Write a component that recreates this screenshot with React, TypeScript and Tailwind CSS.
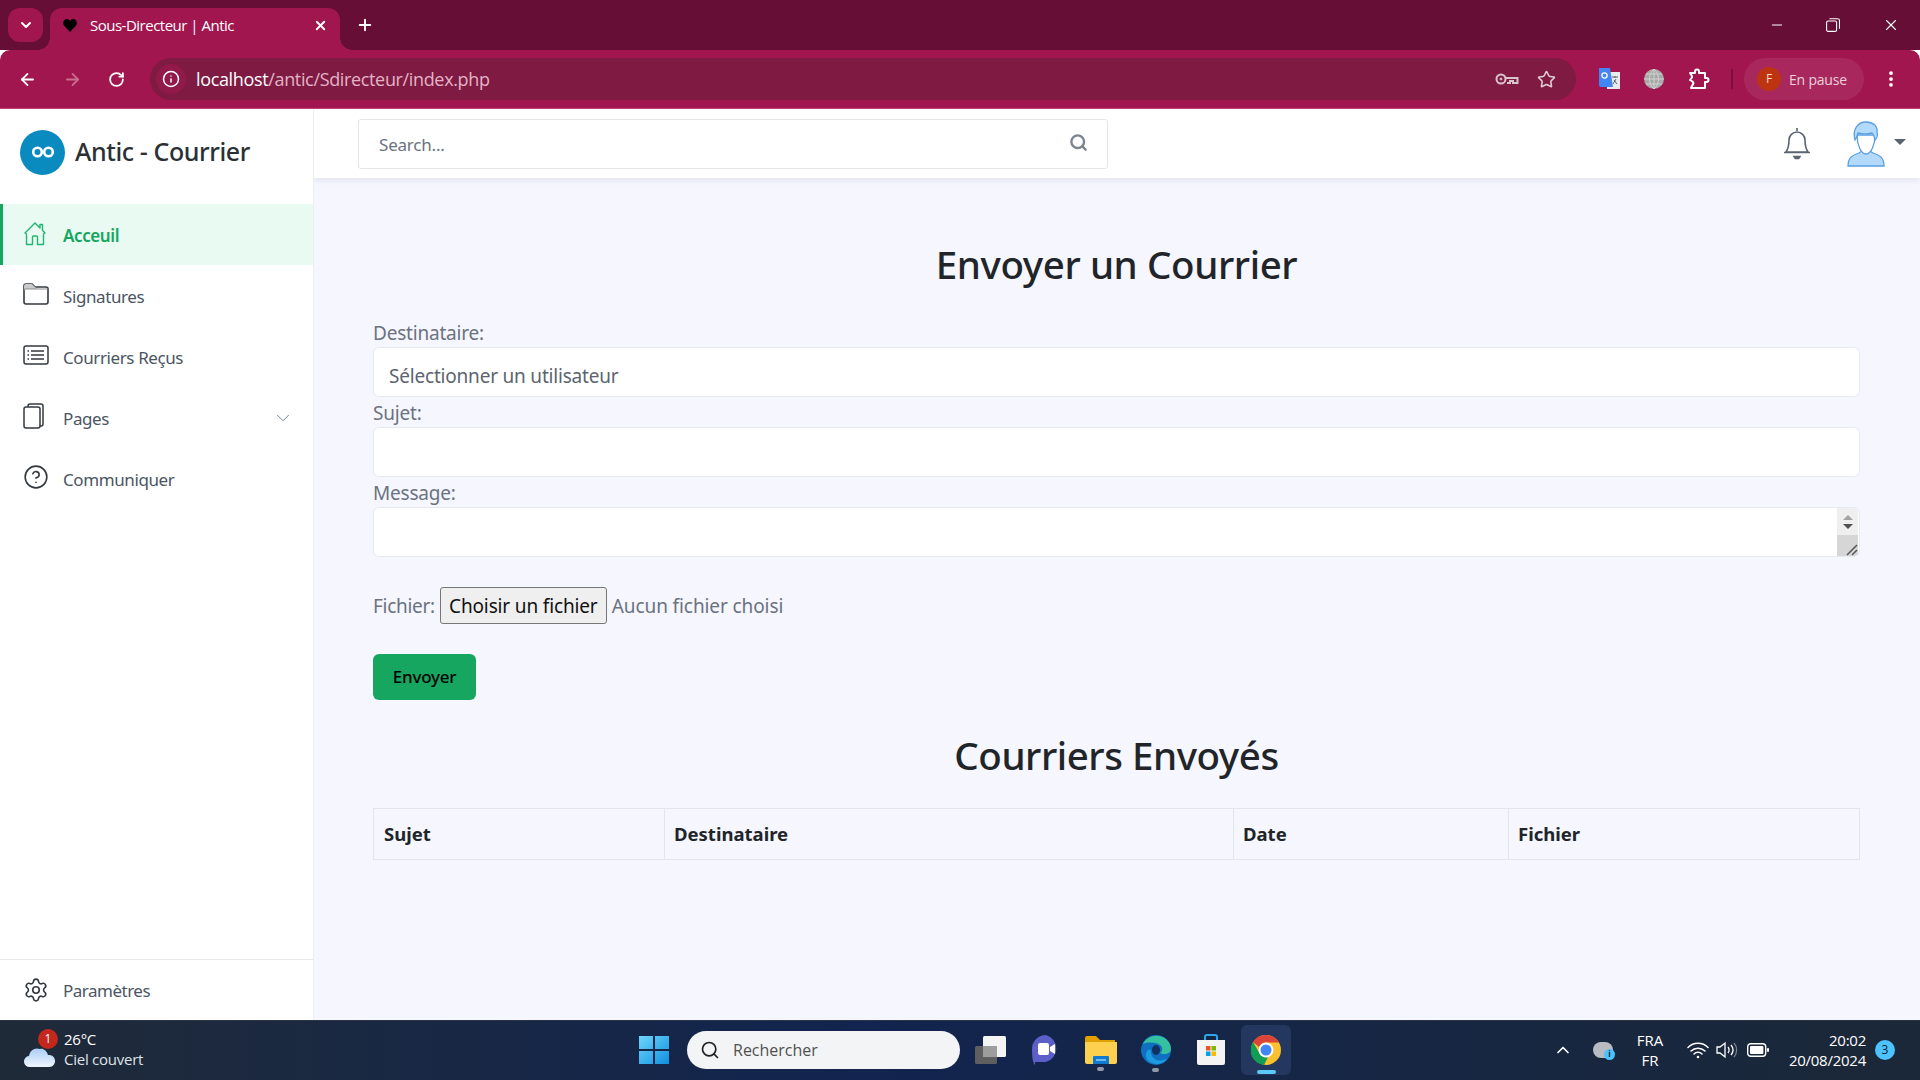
import { ArrowLeft, ArrowRight, ChevronDown, ChevronUp, Minus, Plus, RotateCw, Search, Star, X, Info, MoreVertical, Settings, HelpCircle } from 'lucide-react';

const page = "font-['Noto_Sans','Open_Sans',sans-serif]";

function GoogleTranslate() {
  return (
    <svg width="22" height="22" viewBox="0 0 22 22">
      <rect x="9" y="4" width="13" height="17" fill="#e8eaed" />
      <path d="M14 9h6M17 8v2M15 16l3-5M16 12l3 4" stroke="#5f6368" strokeWidth="1" fill="none" />
      <path d="M1 0h11l3 19H3a2 2 0 0 1-2-2z" fill="#4285f4" />
      <circle cx="6.5" cy="7.5" r="2.6" fill="none" stroke="#fff" strokeWidth="1.3" />
    </svg>
  );
}

function Globe() {
  return (
    <svg width="20" height="20" viewBox="0 0 20 20">
      <circle cx="10" cy="10" r="10" fill="#a8a8a8" />
      <path d="M0 10h20M2 5h16M2 15h16M10 0v20M10 0c-6 5-6 15 0 20M10 0c6 5 6 15 0 20" stroke="#d2d2d2" strokeWidth="1" fill="none" />
    </svg>
  );
}

function KeyIcon() {
  return (
    <svg width="24" height="14" viewBox="0 0 24 14" fill="none" stroke="#d8c4cc" strokeWidth="2">
      <circle cx="6" cy="7" r="4.500" />
      <circle cx="6" cy="7" r="1" fill="#d8c4cc" strokeWidth="1" />
      <path d="M10.500 6H22.500V11H18V9H15V11H12" />
    </svg>
  );
}

function PuzzleIcon() {
  return (
    <svg width="22" height="22" viewBox="0 0 22 22" fill="none" stroke="#fff" strokeWidth="2" strokeLinejoin="round">
      <path d="M2 5h5V3.500a2 2 0 0 1 4 0V5h6v5h1.500a2 2 0 0 1 0 4H17v6H3l1.500-3a2.500 2.500 0 0 0 0-3.500L2 12l2-2.500C4.500 8 3 6.500 2 5z" />
    </svg>
  );
}

function Avatar() {
  return (
    <svg width="38" height="46" viewBox="0 0 38 46">
      <path d="M1 45c0-9 5-11 11-13l3-2h8l3 2c6 2 11 4 11 13z" fill="#b4dafb" stroke="#5a9fe0" strokeWidth="1.3" />
      <path d="M10 14c0 10 4 19 9 19s9-9 9-19z" fill="#fff" stroke="#5a9fe0" strokeWidth="1.3" />
      <path d="M8 19C5 8 11 1 19 1c7 0 12 4 11 10 1 3 0 6-2 8-1-3-1-6-3-7-4 1-10 1-14 0-1 2-1 5-3 7z" fill="#b4dafb" stroke="#5a9fe0" strokeWidth="1.3" />
    </svg>
  );
}

function BellIcon() {
  return (
    <svg width="28" height="34" viewBox="0 0 28 34" fill="none" stroke="#5b6472" strokeWidth="1.6">
      <path d="M14 1v3M3 25c2-3 3-6 3-12a8 8 0 0 1 16 0c0 6 1 9 3 12zM1 25.500h26" />
      <path d="M10 29h8l-2 3h-4z" fill="#5b6472" strokeWidth="0.5" />
    </svg>
  );
}

function Infinity2() {
  return (
    <svg width="24" height="12" viewBox="0 0 24 12" fill="none" stroke="#fff" strokeWidth="2.6">
      <circle cx="6.5" cy="6" r="4.3" />
      <circle cx="17.5" cy="6" r="4.3" />
    </svg>
  );
}

function HomeIcon() {
  return (
    <svg width="24" height="25" viewBox="0 0 24 25" fill="none" stroke="#22b573" strokeWidth="1.4" strokeLinejoin="round">
      <path d="M2 12L12 2l5 5V3.500h2.500v6L22 12l-1.500 1v10.500h-6V16a1 1 0 0 0-1-1h-3a1 1 0 0 0-1 1v7.500h-6V13z" />
    </svg>
  );
}

function FolderOutline() {
  return (
    <svg width="26" height="22" viewBox="0 0 26 22" fill="none" stroke="#343a40" strokeWidth="1.6">
      <path d="M1 3a2 2 0 0 1 2-2h6l3 3h11a2 2 0 0 1 2 2v13a2 2 0 0 1-2 2H3a2 2 0 0 1-2-2z" />
      <path d="M1 7V3a2 2 0 0 1 2-2h6l3 3 2 2H3z" fill="#c8cacc" stroke="none" />
      <path d="M1 6h24" strokeWidth="1" stroke="#8a8d91" />
    </svg>
  );
}

function ListBox() {
  return (
    <svg width="26" height="20" viewBox="0 0 26 20" fill="none" stroke="#343a40" strokeWidth="1.5">
      <rect x="1" y="1" width="24" height="18" rx="2" />
      <path d="M8 6h13M8 10h13M8 14h13M4.5 6h1.5M4.5 10h1.5M4.5 14h1.5" />
    </svg>
  );
}

function Pages() {
  return (
    <svg width="22" height="26" viewBox="0 0 22 26" fill="none" stroke="#343a40" strokeWidth="1.5">
      <rect x="1" y="4" width="16" height="21" rx="2" />
      <path d="M5 4V3a2 2 0 0 1 2-2h11a2 2 0 0 1 2 2v18a2 2 0 0 1-2 2h-1" />
    </svg>
  );
}

function WeatherIcon() {
  return (
    <svg width="32" height="24" viewBox="0 0 32 24">
      <defs>
        <linearGradient id="cloud" x1="0" y1="0" x2="0" y2="1">
          <stop offset="0" stopColor="#a9cdf5" />
          <stop offset="1" stopColor="#f1f6fd" />
        </linearGradient>
      </defs>
      <path d="M6 23a5.500 5.500 0 0 1-1-11C6 6 11 3 16 5c3-1 7 2 8 6a6 6 0 0 1 2 12z" fill="url(#cloud)" />
    </svg>
  );
}

function WinLogo() {
  return (
    <svg width="30" height="30" viewBox="0 0 30 30">
      <defs>
        <linearGradient id="win" x1="0" y1="0" x2="1" y2="1">
          <stop offset="0" stopColor="#6fd6fb" />
          <stop offset="1" stopColor="#0f8fe0" />
        </linearGradient>
      </defs>
      <path d="M0 1h14v13H0zM16 1h14v13H16zM0 16h14v13H0zM16 16h14v13H16z" fill="url(#win)" />
    </svg>
  );
}

function TaskView() {
  return (
    <svg width="32" height="28" viewBox="0 0 32 28">
      <rect x="0" y="10" width="22" height="18" rx="1.500" fill="#5f5f5f" />
      <rect x="8" y="0" width="23" height="21" rx="1.500" fill="#f4f4f4" />
      <rect x="8" y="10" width="14" height="11" fill="#9d9d9d" />
    </svg>
  );
}

function MeetIcon() {
  return (
    <svg width="28" height="30" viewBox="0 0 28 30">
      <path d="M14 0a14 14 0 0 1 0 27H3v3c-2-2-3-6-3-16A14 14 0 0 1 14 0z" fill="#5b5fc7" />
      <rect x="6" y="8" width="11" height="12" rx="2" fill="#fff" />
      <path d="M18 12l5-3v10l-5-3z" fill="#fff" />
    </svg>
  );
}

function FolderIcon() {
  return (
    <svg width="32" height="28" viewBox="0 0 32 28">
      <path d="M0 2a2 2 0 0 1 2-2h9l4 4h15v6H0z" fill="#e0a100" />
      <path d="M0 6h32v20a2 2 0 0 1-2 2H2a2 2 0 0 1-2-2z" fill="#fdd04f" />
      <path d="M9 20h14a1 1 0 0 1 1 1v7H8v-7a1 1 0 0 1 1-1z" fill="#0f7ad0" />
      <path d="M11 24h10" stroke="#8fd0f5" strokeWidth="1.500" />
    </svg>
  );
}

function EdgeIcon() {
  return (
    <svg width="30" height="30" viewBox="0 0 30 30">
      <circle cx="15" cy="15" r="15" fill="#0f6fc0" />
      <path d="M2 9C6 1 17-2 25 4c5 4 6 10 4 13-2 2-7 3-10 1 3-2 3-6 0-8-5-3-12-3-17-1z" fill="#35c1a0" />
      <path d="M10 17c0 6 6 10 12 8l4-1c-4 5-11 7-17 3-5-3-5-9-2-12 1-1 3-1 3 2z" fill="#1d9be0" />
      <ellipse cx="15" cy="15" rx="4" ry="5" fill="#11315f" />
    </svg>
  );
}

function StoreIcon() {
  return (
    <svg width="30" height="32" viewBox="0 0 30 32">
      <path d="M9 6V3a2 2 0 0 1 2-2h8a2 2 0 0 1 2 2v3" stroke="#2aa7e8" strokeWidth="2" fill="none" />
      <path d="M1 6h28v23a2 2 0 0 1-2 2H3a2 2 0 0 1-2-2z" fill="#f4f4f4" />
      <path d="M10 12h4.500v4.500H10z" fill="#e8532a" />
      <path d="M15.500 12H20v4.500h-4.500z" fill="#7fb800" />
      <path d="M10 17.500h4.500V22H10z" fill="#00a1f1" />
      <path d="M15.500 17.500H20V22h-4.500z" fill="#ffb900" />
    </svg>
  );
}

function ChromeIcon() {
  return (
    <svg width="30" height="30" viewBox="0 0 30 30">
      <circle cx="15" cy="15" r="15" fill="#fbc02d" />
      <path d="M15 0a15 15 0 0 1 13 7.500H15a7.500 7.500 0 0 0-7 4.500L2 7a15 15 0 0 1 13-7z" fill="#db4437" />
      <path d="M2 7l6.500 11.300A7.500 7.500 0 0 0 17 22l-4 8A15 15 0 0 1 2 7z" fill="#0f9d58" />
      <circle cx="15" cy="15" r="7.500" fill="#fff" />
      <circle cx="15" cy="15" r="5.500" fill="#4285f4" />
    </svg>
  );
}

function TrayIcons() {
  return (
    <>
      <svg width="22" height="18" viewBox="0 0 22 18" fill="none" stroke="#fff" strokeWidth="1.500" strokeLinecap="round" className="ml-[18px]">
        <path d="M1 6.500a14 14 0 0 1 20 0M4 10a10 10 0 0 1 14 0M7 13a5.500 5.500 0 0 1 8 0" />
        <circle cx="11" cy="16" r="1.300" fill="#fff" stroke="none" />
      </svg>
      <svg width="22" height="18" viewBox="0 0 22 18" fill="none" stroke="#fff" strokeWidth="1.300" className="ml-[7px]">
        <path d="M1 6h3l5-4v14l-5-4H1z" />
        <path d="M12 6c1.500 2 1.500 4 0 6M15 4c2.500 3 2.500 7 0 10" />
        <path d="M18 2c3.500 4 3.500 10 0 14" stroke="#77808a" />
      </svg>
      <svg width="22" height="14" viewBox="0 0 22 14" className="ml-[9px]">
        <rect x="0.700" y="0.700" width="18" height="12.600" rx="3" fill="none" stroke="#fff" strokeWidth="1.400" />
        <rect x="3" y="3" width="13.400" height="8" rx="1" fill="#fff" />
        <rect x="20" y="5" width="2" height="4" rx="1" fill="#fff" />
      </svg>
    </>
  );
}

function ChromeBar() {
  return (
    <div className="font-['Open_Sans',sans-serif]">
      {/* Tabs */}
      <div className="h-[50px] bg-[#660e35] flex items-start pl-2 text-white">
        <div className="mt-2 w-[35px] h-[34px] rounded-xl bg-[#a1164f] flex items-center justify-center">
          <ChevronDown size={16} strokeWidth={3} />
        </div>
        <div className="relative mt-2 ml-[7px] w-[290px] h-[42px] bg-[#a1164f] rounded-t-xl flex items-center pl-[13px] pr-3 pb-2">
          <span className="absolute -left-3 bottom-0 w-3 h-3 bg-[radial-gradient(circle_at_0_0,transparent_11.5px,#a1164f_12px)]" />
          <span className="absolute -right-3 bottom-0 w-3 h-3 bg-[radial-gradient(circle_at_100%_0,transparent_11.5px,#a1164f_12px)]" />
          <svg width="14" height="13" viewBox="0 0 14 13" className="mr-[13px]">
            <path d="M7 13L1 6.500C-1 3.500 1 0 3.800 0 5.200 0 6.400.8 7 2c.6-1.200 1.800-2 3.200-2C13 0 15 3.500 13 6.500z" fill="#000" />
          </svg>
          <span className="text-[15px] tracking-[-0.5px] flex-1">Sous-Directeur | Antic</span>
          <X size={15} strokeWidth={3} />
        </div>
        <div className="ml-[16px] mt-2 h-[34px] flex items-center">
          <Plus size={18} strokeWidth={2.5} />
        </div>
        <div className="flex-1" />
        <div className="h-[50px] flex items-center gap-[41px] pr-[20px]">
          <Minus size={16} strokeWidth={1.5} />
          <svg width="14" height="14" viewBox="0 0 14 14" fill="none" stroke="#fff" strokeWidth="1.100">
            <rect x="0.600" y="3" width="10" height="10.400" rx="1.500" />
            <path d="M3.500 0.700h8a2 2 0 0 1 2 2v8" />
          </svg>
          <X size={18} strokeWidth={1.5} className="ml-px" />
        </div>
      </div>
      {/* Toolbar */}
      <div className="h-[59px] bg-[#a1164f] rounded-t-[10px] border-b border-[#c2426f] flex items-center text-white">
        <div className="w-[150px] pl-[18px] flex items-center gap-[26px]">
          <ArrowLeft size={19} strokeWidth={2.25} />
          <ArrowRight size={19} strokeWidth={2.25} className="text-[#c8708f]" />
          <RotateCw size={17} strokeWidth={2.5} />
        </div>
        <div className="w-[1426px] h-[42px] rounded-full bg-[#7f1a42] flex items-center pl-1.5 pr-[20px]">
          <div className="w-[30px] h-[30px] rounded-full bg-[#921a4a] flex items-center justify-center">
            <Info size={18} strokeWidth={2} />
          </div>
          <span className="ml-[10px] text-[18px] tracking-[-0.35px] text-[#e3b3c6] flex-1">
            <span className="text-white">localhost</span>/antic/Sdirecteur/index.php
          </span>
          <span className="mr-[18px]"><KeyIcon /></span>
          <Star size={19} strokeWidth={2} className="text-[#e0ccd4]" />
        </div>
        <div className="ml-[22px] flex items-center gap-[24px]">
          <GoogleTranslate />
          <Globe />
          <PuzzleIcon />
        </div>
        <div className="ml-[21px] w-[2px] h-[20px] bg-[#7a0f3b]" />
        <div className="ml-[11px] w-[120px] h-[42px] rounded-full bg-[#a8285d] flex items-center pl-[13px]">
          <div className="w-6 h-6 rounded-full bg-[#bd3510] flex items-center justify-center text-[12px] text-[#f6dccf]">F</div>
          <span className="ml-2 text-[14px] tracking-[-0.2px] text-[#ecd0dd]">En pause</span>
        </div>
        <MoreVertical size={20} strokeWidth={2.5} className="ml-[17px]" />
      </div>
    </div>
  );
}

function NavItem({ icon, label, active, chevron }: { icon: React.ReactNode; label: string; active?: boolean; chevron?: boolean }) {
  return (
    <div className={`h-[61px] flex items-center ${active ? 'bg-[#e9faf3] border-l-[3px] border-[#16a660] text-[#16a660] font-semibold pl-[20px]' : 'pl-[23px] text-[#4b5563]'} pr-[19px]`}>
      <span className="w-[40px] flex items-center -mt-[3px]">{icon}</span>
      <span className="flex-1 text-[17px] tracking-[-0.4px] pt-[2px]">{label}</span>
      {chevron && <ChevronDown size={22} strokeWidth={1} className="text-[#6b7a90]" />}
    </div>
  );
}

function Sidebar() {
  return (
    <aside className="w-[314px] shrink-0 bg-white border-r border-[#eeeeee] flex flex-col">
      <div className="h-[95px] flex items-center pl-5 pb-[9px]">
        <div className="w-[45px] h-[45px] rounded-full bg-[#0a8bc0] flex items-center justify-center">
          <Infinity2 />
        </div>
        <span className="ml-[10px] text-[25px] font-medium tracking-[-0.4px] text-[#2b3035]">Antic - Courrier</span>
      </div>
      <NavItem active label="Acceuil" icon={<HomeIcon />} />
      <NavItem label="Signatures" icon={<FolderOutline />} />
      <NavItem label="Courriers Reçus" icon={<ListBox />} />
      <NavItem chevron label="Pages" icon={<Pages />} />
      <NavItem label="Communiquer" icon={<HelpCircle size={26} strokeWidth={1.5} className="text-[#343a40]" />} />
      <div className="mt-auto h-[61px] border-t border-[#e8e8e8] flex items-center pl-[23px] text-[#4b5563]">
        <span className="w-[40px]"><Settings size={26} strokeWidth={1.5} className="text-[#343a40]" /></span>
        <span className="text-[17px] tracking-[-0.5px] pt-[2px]">Paramètres</span>
      </div>
    </aside>
  );
}

function Header() {
  return (
    <header className="h-[69px] bg-white shadow-[0_2px_6px_rgba(30,40,90,0.1)] flex items-center pl-[44px] pr-[14px]">
      <div className="w-[750px] h-[50px] border border-[#e4e6ea] rounded-[3px] flex items-center pl-5 pr-[19px]">
        <span className="flex-1 text-[17px] tracking-[-0.2px] text-[#6b7280] pt-[2px]">Search...</span>
        <Search size={19} strokeWidth={3} className="text-[#7c8490] -mt-[2px]" />
      </div>
      <div className="flex-1" />
      <BellIcon />
      <span className="ml-[36px]"><Avatar /></span>
      <div className="ml-[9px] mb-1 w-0 h-0 border-x-[6px] border-x-transparent border-t-[6px] border-t-[#5b6270]" />
    </header>
  );
}

function Field({ label }: { label: string }) {
  return (
    <>
      <label className="block h-[25px] leading-[23px] text-[19px] text-[#6b7280] tracking-[-0.2px]">{label}</label>
      <div className="h-[50px] bg-white border border-[#e8e9f0] rounded-md mb-[5px]" />
    </>
  );
}

function Main() {
  return (
    <main className="flex-1 bg-[#f5f6fe] overflow-hidden">
      <Header />
      <div className="pl-[59px] pr-[60px] pt-[62px]">
        <h1 className="text-center text-[38.5px] leading-[48px] font-medium text-[#212529] tracking-[-0.4px]">Envoyer un Courrier</h1>
        <div className="mt-[30px]">
          <label className="block h-[29px] leading-[30px] text-[19px] text-[#6b7280] tracking-[-0.2px]">Destinataire:</label>
          <div className="h-[50px] bg-white border border-[#e8e9f0] rounded-md mb-[5px] flex items-center pl-[15px] pt-2 text-[19px] text-[#5b6470] tracking-[-0.2px]">Sélectionner un utilisateur</div>
          <Field label="Sujet:" />
          <label className="block h-[25px] leading-[23px] text-[19px] text-[#6b7280] tracking-[-0.2px]">Message:</label>
          <div className="h-[50px] bg-white border border-[#e8e9f0] rounded-md flex justify-end overflow-hidden pr-[1px]">
            <div className="w-[21px] flex flex-col">
              <div className="h-[27px] bg-[#efefef] flex flex-col items-center justify-center gap-[4px]">
                <div className="w-0 h-0 border-x-[5px] border-x-transparent border-b-[5px] border-b-[#a3a3a3]" />
                <div className="w-0 h-0 border-x-[5px] border-x-transparent border-t-[5px] border-t-[#505050]" />
              </div>
              <div className="flex-1 bg-[#d6d6d6] flex items-end justify-end">
                <svg width="12" height="12" viewBox="0 0 12 12" stroke="#555" strokeWidth="1.500" fill="none">
                  <path d="M1 11L11 1M6 11l5-5" />
                </svg>
              </div>
            </div>
          </div>
          <div className="mt-[29px] h-[38px] flex items-center text-[19px] text-[#6b7280] tracking-[-0.1px]">
            <span className="pt-[2px] tracking-[-0.3px]">Fichier:</span>
            <button className="ml-[5px] h-[37px] w-[167px] bg-[#efefef] border border-[#767676] rounded-[3px] text-[#111] text-[19px] tracking-[-0.15px] pt-[2px]">Choisir un fichier</button>
            <span className="ml-[5px] pt-[2px]">Aucun fichier choisi</span>
          </div>
          <button className="mt-[30px] block w-[103px] h-[46px] rounded-md bg-[#16a660] text-black text-[17px] font-medium tracking-[-0.2px]">Envoyer</button>
        </div>
        <h2 className="mt-[31px] text-center text-[38.5px] leading-[48px] font-medium text-[#212529] tracking-[-0.45px]">Courriers Envoyés</h2>
        <table className="mt-[29px] w-full table-fixed border-collapse text-[18.5px] text-[#212529]">
          <thead>
            <tr className="h-[51px]">
              <th className="w-[291px] border border-[#e3e5ec] text-left font-bold pl-[10px]">Sujet</th>
              <th className="w-[569px] border border-[#e3e5ec] text-left font-bold pl-[9px]">Destinataire</th>
              <th className="w-[275px] border border-[#e3e5ec] text-left font-bold pl-[9px]">Date</th>
              <th className="border border-[#e3e5ec] text-left font-bold pl-[9px]">Fichier</th>
            </tr>
          </thead>
        </table>
      </div>
    </main>
  );
}

function Taskbar() {
  return (
    <footer className="h-[60px] pb-[2px] border-t border-[#2a3442] bg-gradient-to-r from-[#1f2a38] via-[#12244f] via-45% to-[#1b2838] flex items-center text-white font-['Open_Sans',sans-serif]">
      <div className="w-[639px] pl-[24px] flex items-center">
        <div className="relative pt-3">
          <WeatherIcon />
          <span className="absolute -top-[3px] left-[14px] w-[20px] h-[20px] rounded-full bg-[#c4271b] text-[12px] flex items-center justify-center">1</span>
        </div>
        <div className="ml-[8px] -mt-[2px] leading-[20px] text-[15px] tracking-[-0.25px]">
          <div>26°C</div>
          <div className="text-[#dfe3e8]">Ciel couvert</div>
        </div>
      </div>
      <WinLogo />
      <div className="ml-[18px] w-[273px] h-[38px] rounded-full bg-[#f3f4f6] flex items-center pl-[13px] text-[#505050] text-[16px]">
        <Search size={20} strokeWidth={2} className="text-[#222]" />
        <span className="ml-[13px]">Rechercher</span>
      </div>
      <div className="ml-[3px] flex items-center">
        <div className="w-[55px] flex justify-center"><TaskView /></div>
        <div className="w-[55px] flex justify-center"><MeetIcon /></div>
        <div className="w-[55px] flex flex-col items-center relative"><FolderIcon /><span className="absolute -bottom-[7px] w-[7px] h-[4px] rounded-full bg-[#8f99a8]" /></div>
        <div className="w-[55px] flex flex-col items-center relative"><EdgeIcon /><span className="absolute -bottom-[7px] w-[7px] h-[4px] rounded-full bg-[#8f99a8]" /></div>
        <div className="w-[55px] flex justify-center"><StoreIcon /></div>
        <div className="ml-[3px] w-[50px] h-[50px] rounded-md bg-[#24375f] flex justify-center items-center relative"><ChromeIcon /><span className="absolute bottom-[1px] w-[19px] h-[4px] rounded-full bg-[#5cc8f5]" /></div>
      </div>
      <div className="flex-1" />
      <div className="flex items-center pr-[25px]">
        <ChevronUp size={20} strokeWidth={2} />
        <div className="ml-[20px] w-[20px] h-[16px] rounded-full bg-[#b8bcc2] relative mr-[18px]">
          <span className="absolute -right-[2px] -bottom-[2px] w-[11px] h-[11px] rounded-full bg-[#4cc2ff] text-[#10202e] text-[8px] font-bold flex items-center justify-center">i</span>
        </div>
        <div className="w-[38px] text-center text-[15px] leading-[20px]">
          <div>FRA</div>
          <div>FR</div>
        </div>
        <TrayIcons />
        <div className="ml-[17px] w-[80px] text-right text-[15px] leading-[20px] tracking-[-0.25px]">
          <div>20:02</div>
          <div>20/08/2024</div>
        </div>
        <span className="ml-[9px] w-[20px] h-[20px] rounded-full bg-[#4cc2ff] text-[#10202e] text-[12px] flex items-center justify-center">3</span>
      </div>
    </footer>
  );
}

export default function App() {
  return (
    <div className={`h-screen w-screen overflow-hidden flex flex-col ${page}`}>
      <ChromeBar />
      <div className="flex-1 flex min-h-0">
        <Sidebar />
        <Main />
      </div>
      <Taskbar />
    </div>
  );
}
